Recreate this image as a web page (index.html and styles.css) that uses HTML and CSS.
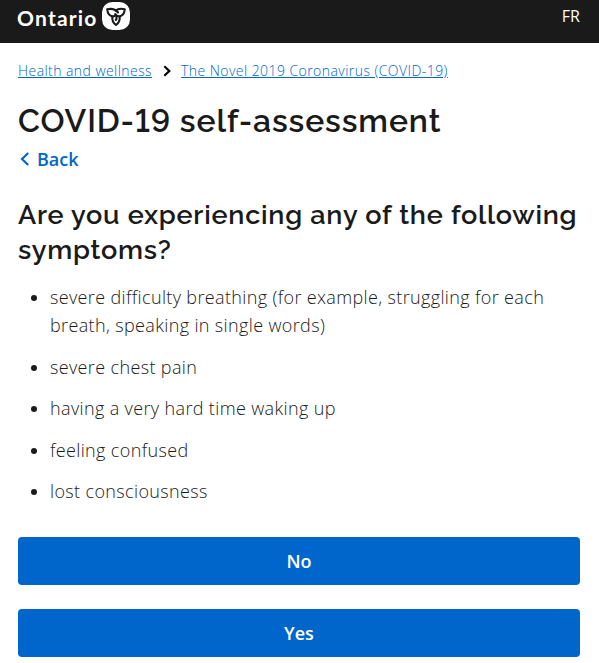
FILE: index.html
```html
<!DOCTYPE html>
<html lang="en">
<head>
  <meta charset="UTF-8">
  <title>COVID-19 self-assessment</title>
  <link rel="stylesheet" href="styles.css">
</head>
<body>
  <header class="site-header">
    <a href="#" class="logo">
      <span class="logo-text">Ontario</span>
      <svg class="logo-mark" width="28" height="28" viewBox="0 0 28 28">
        <rect width="28" height="28" rx="10.5" fill="#fff"/>
        <g fill="none" stroke="#1a1a1a" stroke-width="2.1" stroke-linejoin="round" stroke-linecap="round">
          <path d="M16 10.500C13.500 7.200 9.500 6.400 5.200 7.200C5.600 11.200 7.500 14 10.600 14.400C12.300 14.500 13.400 13.600 13.400 12"/>
          <path d="M13.500 8.600C16 6.700 19.500 6.500 22.800 7.200C22.400 11.200 20.500 14 17.400 14.400C15.800 14.500 14.800 14 13.900 13"/>
          <path d="M10.300 14.800C9.900 18.300 11.400 21 14 23C16.600 21 18.100 18.300 17.700 14.800M14.300 14.300C14.800 15.800 14.600 17 13.800 18"/>
        </g>
      </svg>
    </a>
    <a href="#" class="lang">FR</a>
  </header>

  <main class="container">
    <nav class="breadcrumbs">
      <a href="#">Health and wellness</a>
      <svg class="crumb-arrow" width="8" height="12" viewBox="0 0 8 12"><path d="M1.300 1.200L6.300 6L1.300 10.800"/></svg>
      <a href="#">The Novel 2019 Coronavirus (COVID-19)</a>
    </nav>

    <h1>COVID-19 self-assessment</h1>
    <a href="#" class="back">
      <svg width="10" height="14" viewBox="0 0 10 14"><path d="M8.200 1L2 7L8.200 13"/></svg>
      <span>Back</span>
    </a>

    <h2>Are you experiencing any of the following symptoms?</h2>
    <ul class="symptoms">
      <li>severe difficulty breathing (for example, struggling for each breath, speaking in single words)</li>
      <li>severe chest pain</li>
      <li>having a very hard time waking up</li>
      <li>feeling confused</li>
      <li>lost consciousness</li>
    </ul>

    <div class="answers">
      <button type="button">No</button>
      <button type="button">Yes</button>
    </div>
  </main>
</body>
</html>
```

FILE: styles.css
```css
* {
  box-sizing: border-box;
}
body {
  margin: 0;
  font-family: "Open Sans", sans-serif;
  color: #1a1a1a;
  background-color: #fff;
}
.site-header {
  display: flex;
  justify-content: space-between;
  height: 43px;
  padding: 2px 19px 0 17px;
  background-color: #1a1a1a;
}
.logo {
  display: flex;
  height: 28px;
  color: #fff;
  text-decoration: none;
}
.logo-text {
  width: 85px;
  font-family: Lato, sans-serif;
  font-size: 21px;
  font-weight: bold;
  line-height: 31px;
  letter-spacing: 1.2px;
  white-space: nowrap;
}
.lang {
  color: #fff;
  font-size: 16px;
  line-height: 29px;
  text-decoration: none;
}
.container {
  padding: 16px 19px 6px 18px;
}
.breadcrumbs {
  display: flex;
  align-items: center;
  height: 23px;
  font-size: 14px;
  font-weight: 300;
  letter-spacing: 0.44px;
}
.breadcrumbs a {
  color: #06c;
}
.crumb-arrow {
  margin: 1px 10px 0 11px;
  fill: none;
  stroke: #000;
  stroke-width: 2.2;
}
h1, h2 {
  margin: 0;
  font-family: Raleway, "Open Sans", sans-serif;
  font-weight: 600;
  font-variant-numeric: lining-nums;
}
h1 {
  margin-top: 18px;
  font-size: 32px;
  line-height: 42px;
  letter-spacing: 0.9px;
  white-space: nowrap;
}
.back {
  display: flex;
  align-items: center;
  gap: 7px;
  height: 34px;
  padding-left: 2px;
  color: #06c;
  font-size: 18px;
  font-weight: 600;
  text-decoration: none;
}
.back svg {
  fill: none;
  stroke: #06c;
  stroke-width: 2.2;
}
h2 {
  margin-top: 21px;
  font-size: 27px;
  line-height: 35px;
  letter-spacing: 0.75px;
}
.symptoms {
  margin: 16px 0 32px;
  padding-left: 32px;
  font-size: 18px;
  font-weight: 300;
  line-height: 28px;
  letter-spacing: 0.36px;
}
.symptoms li {
  margin-bottom: 13.6px;
}
.answers {
  display: flex;
  flex-direction: column;
  gap: 24px;
}
.answers button {
  height: 48px;
  padding: 0;
  border: none;
  border-radius: 4px;
  background-color: #06c;
  color: #fff;
  font-family: inherit;
  font-size: 18px;
  font-weight: 600;
  cursor: pointer;
}
```
